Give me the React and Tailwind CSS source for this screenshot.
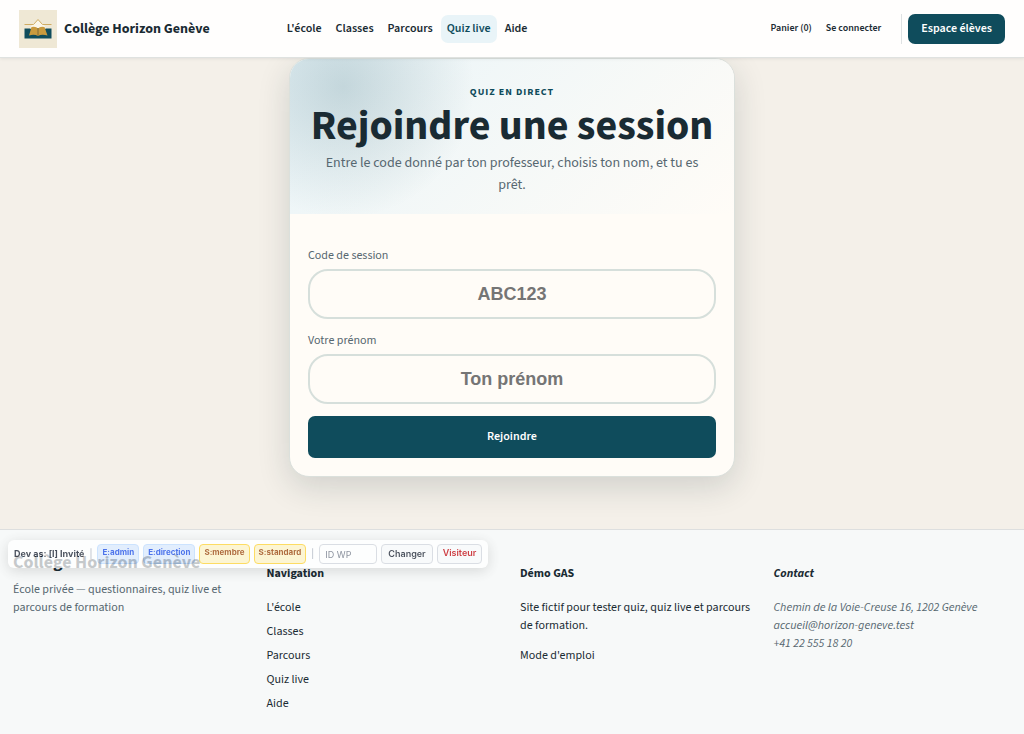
const NAV = ["L'école", 'Classes', 'Parcours', 'Quiz live', 'Aide'];

const ROLES = [
  { label: 'E:admin', className: 'border-blue-200 bg-blue-100 text-blue-700' },
  { label: 'E:direction', className: 'border-blue-200 bg-blue-100 text-blue-700' },
  { label: 'S:membre', className: 'border-amber-300 bg-amber-100 text-amber-800' },
  { label: 'S:standard', className: 'border-amber-300 bg-amber-100 text-amber-800' },
];

function Logo() {
  return (
    <svg viewBox="0 0 38 38" className="size-[38px] shrink-0" aria-hidden="true">
      <rect width="38" height="38" fill="#efe8d5" />
      <path d="M5.500 18.500H32.500V28.500H5.500Z" fill="#0f4c5c" />
      <path d="M13 15L19 10L25 15L27 18.500H11Z" fill="#fbf7ea" />
      <path d="M5.500 14.500H14.500L19 9.500L23.500 14.500H32.500" fill="none" stroke="#d0ac62" strokeWidth="1" />
      <path d="M12.500 17Q17 16 19 18.500Q21 16 25.500 17L28.500 25.500Q22.500 24 19 26Q15.500 24 10 25.500Z" fill="#c99a3e" />
      <path d="M19 18V26" stroke="#7d6a3a" strokeWidth="1" />
    </svg>
  );
}

function Header() {
  return (
    <header className="relative z-10 flex h-[58px] items-center border-b border-[#dfe2e0] bg-[#fffefd] px-[19px] shadow-[0_1px_3px_rgba(26,43,51,0.08)]">
      <a href="#" className="flex items-center gap-[7px] text-sm font-bold whitespace-nowrap">
        <Logo />
        Collège Horizon Genève
      </a>
      <nav className="ml-[71px] flex gap-[2px] text-xs font-semibold whitespace-nowrap">
        {NAV.map(item => (
          <a
            key={item}
            href="#"
            className={item === 'Quiz live'
              ? 'rounded-[7px] bg-[#e9f4f8] px-[6px] leading-7 text-[#0f4c5c]'
              : 'px-[6px] leading-7'}
          >{item}</a>
        ))}
      </nav>
      <div className="ml-auto flex items-center text-[10px] font-semibold whitespace-nowrap">
        <a href="#" className="mr-[14px]">Panier (0)</a>
        <a href="#" className="mr-5">Se connecter</a>
        <span className="mr-[6px] h-[30px] w-px bg-[#dfe2e3]" />
        <a href="#" className="rounded-[7px] bg-[#0f4c5c] px-[13px] text-xs leading-[30px] text-white">Espace élèves</a>
      </div>
    </header>
  );
}

function Field({ id, label, placeholder }) {
  return (
    <div className="flex flex-col">
      <label htmlFor={id} className="mb-[3px] text-xs leading-5 text-[#566770]">{label}</label>
      <input
        id={id}
        type="text"
        placeholder={placeholder}
        className="h-[50px] w-full rounded-[20px] border-2 border-[#d6dfdb] bg-transparent text-center font-['Liberation_Sans',Arial,sans-serif] text-lg font-bold placeholder:text-[#757575]"
      />
    </div>
  );
}

function JoinCard() {
  return (
    <section className="mx-auto max-w-[446px] overflow-hidden rounded-[20px] border border-[#dbe0dc] bg-[#fffcf7] shadow-[0_10px_32px_rgba(26,43,51,0.16)]">
      <div className="bg-[radial-gradient(circle_at_12%_18%,rgba(15,76,92,0.18),transparent_32%),linear-gradient(135deg,#e9f4f8,#fffcf7)] px-[18px] pt-[25px] pb-[18px] text-center">
        <p className="text-[10px] leading-4 font-bold tracking-[1px] text-[#0f4c5c] uppercase">Quiz en direct</p>
        <h1 className="text-[42px] leading-[52px] font-bold whitespace-nowrap">Rejoindre une session</h1>
        <p className="mx-auto max-w-[390px] text-sm leading-[22px] text-[#566770]">
          Entre le code donné par ton professeur, choisis ton nom, et tu es prêt.
        </p>
      </div>
      <form className="flex flex-col gap-3 px-[18px] pt-8 pb-[18px]" onSubmit={e => e.preventDefault()}>
        <Field id="code" label="Code de session" placeholder="ABC123" />
        <Field id="prenom" label="Votre prénom" placeholder="Ton prénom" />
        <button type="submit" className="h-[42px] rounded-[7px] bg-[#0f4c5c] text-xs font-semibold text-white">Rejoindre</button>
      </form>
    </section>
  );
}

function Footer() {
  return (
    <footer className="grid flex-1 grid-cols-4 gap-4 border-t border-[#dddfdf] bg-[#f7f9f9] px-[13px] pt-[19px] pb-5 text-xs leading-[18px]">
      <div>
        <p className="mb-1 text-lg leading-7 font-bold whitespace-nowrap">Collège Horizon Genève</p>
        <p className="text-[#566770]">École privée — questionnaires, quiz live et parcours de formation</p>
      </div>
      <nav className="pt-4" aria-label="Pied de page">
        <h2 className="mb-4 font-bold">Navigation</h2>
        <ul className="flex flex-col gap-[6px]">
          {NAV.map(item => <li key={item}><a href="#">{item}</a></li>)}
        </ul>
      </nav>
      <div className="pt-4">
        <h2 className="mb-4 font-bold">Démo GAS</h2>
        <p className="mb-3">Site fictif pour tester quiz, quiz live et parcours de formation.</p>
        <a href="#">Mode d'emploi</a>
      </div>
      <address className="pt-4 text-[#566770] italic">
        <h2 className="mb-4 font-bold text-[#1a2b33]">Contact</h2>
        <p className="whitespace-nowrap">Chemin de la Voie-Creuse 16, 1202 Genève</p>
        <a href="#" className="block">accueil@horizon-geneve.test</a>
        <p>+41 22 555 18 20</p>
      </address>
    </footer>
  );
}

// Floating developer bar, lies over the page at the bottom left
function DevBar() {
  return (
    <div className="fixed bottom-[166px] left-2 flex h-7 items-center gap-1 rounded-md bg-white px-[6px] font-['Inter',sans-serif] text-[9px] font-semibold whitespace-nowrap text-gray-900 opacity-75 shadow-[0_3px_14px_rgba(0,0,0,0.18)]">
      <span className="font-bold">Dev as: [I] Invité</span>
      <span className="px-px font-normal text-gray-400">|</span>
      {ROLES.map(r => (
        <button key={r.label} type="button" className={`flex h-5 items-start rounded border px-1 text-[8px] leading-[14px] font-bold ${r.className}`}>{r.label}</button>
      ))}
      <span className="px-px font-normal text-gray-400">|</span>
      <input
        aria-label="ID WP"
        placeholder="ID WP"
        className="h-5 w-[58px] rounded border border-gray-300 bg-white px-[5px] font-normal placeholder:text-gray-500"
      />
      <button type="button" className="h-5 rounded border border-gray-300 bg-gray-50 px-[6px]">Changer</button>
      <button type="button" className="flex h-5 items-start rounded border border-gray-300 bg-gray-50 px-[5px] leading-4 text-red-700">Visiteur</button>
    </div>
  );
}

export default function App() {
  return (
    <div className="flex min-h-screen flex-col bg-[#f4f0e9] font-['Source_Sans_3','Noto_Sans_CJK_SC',sans-serif] text-[#1a2b33]">
      <Header />
      <main className="px-4 pb-[52px]">
        <JoinCard />
      </main>
      <Footer />
      <DevBar />
    </div>
  );
}
